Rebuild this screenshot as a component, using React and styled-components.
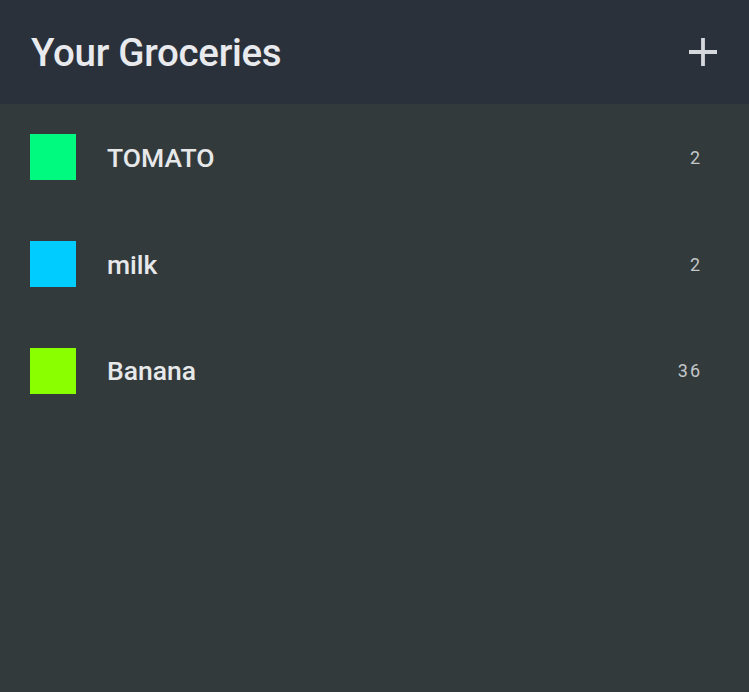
import React from "react";
import styled, { createGlobalStyle } from "styled-components";

const Global = createGlobalStyle`
  html, body { margin: 0; padding: 0; background: #333a3c; }
  body { font-family: Roboto, "Liberation Sans", sans-serif; }
`;

const Page = styled.div`
  width: 749px;
  height: 692px;
  background: #333a3c;
  display: flex;
  flex-direction: column;
`;

const Header = styled.header`
  height: 104px;
  flex: none;
  background: #2b313b;
  display: flex;
  align-items: center;
  justify-content: space-between;
  padding: 0 31px 0 31px;
  box-sizing: border-box;
`;

const Title = styled.h1`
  margin: 0;
  font-size: 38.5px;
  font-weight: 500;
  color: #e8eaee;
  letter-spacing: -0.3px;
  position: relative;
  top: 0px;
`;

const AddButton = styled.button`
  background: none;
  border: none;
  padding: 0;
  width: 30px;
  height: 30px;
  display: flex;
  align-items: center;
  justify-content: center;
  margin-right: 0;
  cursor: pointer;
`;

const List = styled.ul`
  list-style: none;
  margin: 0;
  padding: 0;
`;

const Row = styled.li`
  height: 106.7px;
  display: flex;
  align-items: center;
  padding: 0 49px 0 30px;
`;

const Swatch = styled.span`
  width: 46px;
  height: 46px;
  flex: none;
  background: ${(p) => p.$color};
`;

const Name = styled.span`
  margin-left: 31px;
  flex: 1;
  font-size: 26.5px;
  font-weight: 500;
  color: #e6e8ea;
`;

const Count = styled.span`
  font-size: 18px;
  color: #c3c7c9;
  letter-spacing: 2px;
  margin-right: -2px;
`;

const items = [
  { name: "TOMATO", color: "#00fa80", count: "2" },
  { name: "milk", color: "#00ccff", count: "2" },
  { name: "Banana", color: "#8aff00", count: "36" },
];

export default function App() {
  return (
    <>
      <Global />
      <Page>
        <Header>
          <Title>Your Groceries</Title>
          <AddButton aria-label="Add">
            <svg width="28" height="28" viewBox="0 0 28 28">
              <path d="M14 0v28M0 14h28" stroke="#d5d8dc" strokeWidth="3.8" />
            </svg>
          </AddButton>
        </Header>
        <List>
          {items.map((it) => (
            <Row key={it.name}>
              <Swatch $color={it.color} />
              <Name>{it.name}</Name>
              <Count>{it.count}</Count>
            </Row>
          ))}
        </List>
      </Page>
    </>
  );
}
